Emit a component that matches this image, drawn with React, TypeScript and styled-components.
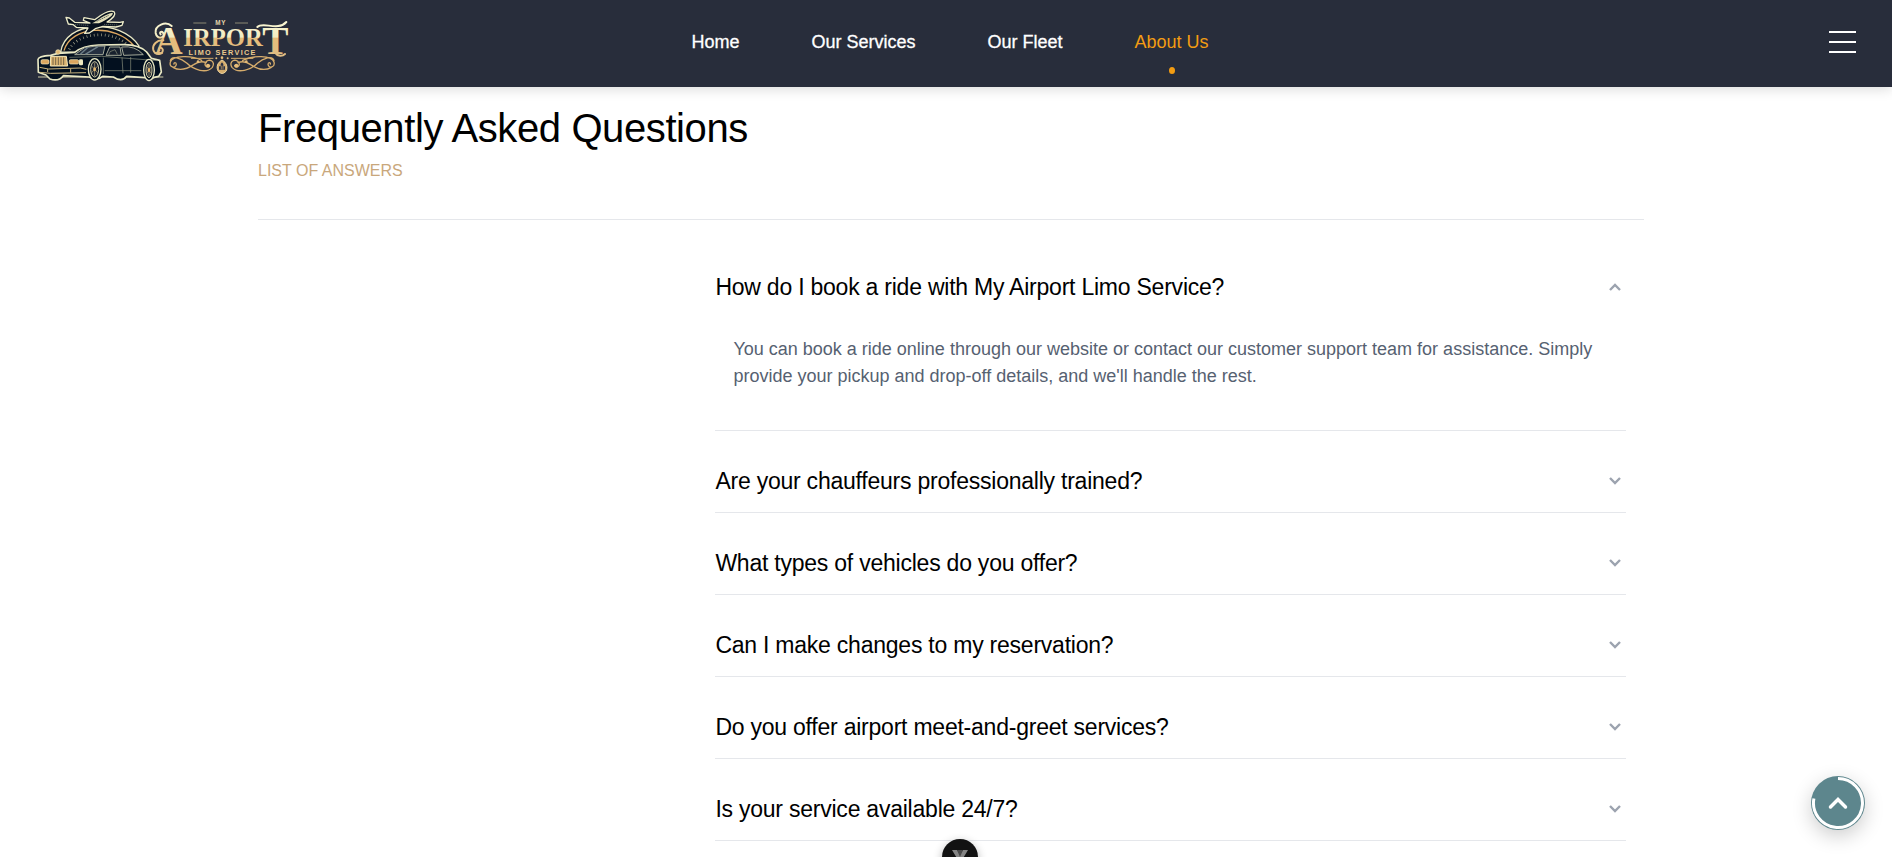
import React, { useState } from "react";
import styled, { createGlobalStyle } from "styled-components";

const GlobalStyle = createGlobalStyle`
  *, *::before, *::after { box-sizing: border-box; }
  body {
    margin: 0;
    background: #fff;
    color: #000;
    font-family: Arial, "Liberation Sans", sans-serif;
    overflow: hidden;
  }
  h1, h2 {
    margin: 0;
    font-weight: 400;
    letter-spacing: -0.01em;
  }
`;

const Header = styled.header`
  display: grid;
  grid-template-columns: 1fr auto 1fr;
  align-items: center;
  height: 87px;
  padding: 0 36px;
  background: #282d3b;
  box-shadow: 0 2px 12px rgba(0, 0, 0, 0.15);
`;

const LogoLink = styled.a`
  display: block;
  width: 254px;
  height: 87px;
  svg { display: block; width: 100%; height: 100%; }
`;

const Nav = styled.nav`
  display: flex;
  gap: 72px;
  padding: 0 0 4px 8px;
`;

const NavLink = styled.a<{ $active?: boolean }>`
  position: relative;
  color: ${(p) => (p.$active ? "#f39c12" : "#fff")};
  font-size: 18px;
  line-height: 24px;
  text-decoration: none;
  -webkit-text-stroke: ${(p) => (p.$active ? "0" : "0.3px #fff")};
  &::after {
    content: "";
    display: ${(p) => (p.$active ? "block" : "none")};
    position: absolute;
    left: 50%;
    bottom: -20px;
    width: 6px;
    height: 7px;
    margin-left: -3px;
    border-radius: 50%;
    background: #f39c12;
  }
`;

const MenuButton = styled.button`
  justify-self: end;
  display: flex;
  flex-direction: column;
  gap: 8px;
  width: 27px;
  padding: 0 0 4px;
  border: 0;
  background: none;
  span { height: 2px; background: #fff; }
`;

const Main = styled.main`
  padding-left: 10px;
`;

const Container = styled.div`
  width: 74%;
  max-width: 1386px;
  margin: 0 auto;
`;

const PageHead = styled.div`
  padding: 17px 0 36px;
  border-bottom: 1px solid #e5e7eb;
`;

const Title = styled.h1`
  font-size: 40px;
  line-height: 48px;
`;

const Subtitle = styled.p`
  margin: 7px 0 0;
  color: #c9a77c;
  font-size: 16px;
  line-height: 24px;
`;

const FaqList = styled.div`
  margin-left: 33%;
  padding: 17px 18px 0 0;
`;

const FaqItem = styled.section`
  padding-top: 32px;
  border-bottom: 1px solid #e5e7eb;
`;

const Heading = styled.h2`
  font-size: 23px;
`;

const Question = styled.button`
  display: flex;
  align-items: center;
  justify-content: space-between;
  width: 100%;
  padding: 0 5px 13px 0;
  border: 0;
  background: none;
  color: #000;
  font: inherit;
  letter-spacing: inherit;
  line-height: 36px;
  text-align: left;
`;

const Answer = styled.p`
  margin: 0;
  padding: 18px 18px 40px;
  color: #566171;
  font-size: 18px;
  line-height: 27px;
`;

const TopButton = styled.button`
  position: fixed;
  right: 27px;
  bottom: 27px;
  width: 54px;
  height: 54px;
  padding: 0;
  border: 0;
  border-radius: 50%;
  background: #5d868d;
  box-shadow: 0 6px 20px rgba(0, 0, 0, 0.2);
  svg { display: block; }
`;

const Bubble = styled.button`
  position: fixed;
  left: calc(50% - 4px);
  bottom: -18px;
  width: 36px;
  height: 36px;
  padding: 0;
  border: 0;
  border-radius: 50%;
  background: #121212;
  box-shadow: 0 3px 10px rgba(0, 0, 0, 0.3);
  svg { display: block; }
`;

function Wheel({ x, y, rx }: { x: number; y: number; rx: number }) {
  return (
    <g>
      <ellipse cx={x} cy={y} rx={rx + 5} ry="32" fill="#03101f" stroke="#e9e8c4" strokeWidth="4" />
      <ellipse cx={x} cy={y} rx={rx - 2} ry="23" fill="#1b2230" stroke="#cfcba6" strokeWidth="3" />
      <path
        d={`M${x} ${y - 20}V${y + 20}M${x - rx + 4} ${y - 11}L${x + rx - 4} ${y + 11}M${x + rx - 4} ${y - 11}L${x - rx + 4} ${y + 11}`}
        stroke="#bdb083"
        strokeWidth="2"
      />
      <ellipse cx={x} cy={y} rx="4" ry="6" fill="#e7b96e" />
    </g>
  );
}

const scroll =
  "M170 181C140 165 82 166 76 186C72 202 91 207 94 194C94 186 86 187 87 192M76 182C80 165 108 174 126 190C146 210 184 222 202 202C214 184 190 172 181 189C177 199 190 205 194 197M84 202C104 214 128 206 146 194C160 184 174 184 184 188";

function Logo() {
  return (
    <svg viewBox="18 0 762 261" role="img" aria-label="My Airport Limo Service">
      <defs>
        <linearGradient id="gold" gradientUnits="userSpaceOnUse" x1="0" y1="60" x2="0" y2="170">
          <stop offset="0" stopColor="#fbf8d6" />
          <stop offset="0.47" stopColor="#f2ebc0" />
          <stop offset="0.49" stopColor="#e6bd7a" />
          <stop offset="1" stopColor="#dfbd84" />
        </linearGradient>
      </defs>

      {/* dome behind the car */}
      <path d="M92 156C106 62 270 54 327 138L310 160Z" fill="#07111e" stroke="#e9e8c4" strokeWidth="4" />
      <path d="M102 152C122 76 258 70 312 138" fill="none" stroke="#dca65f" strokeWidth="4" />
      <path d="M118 148C145 96 248 90 292 134" fill="none" stroke="#a9a98f" strokeWidth="8" strokeDasharray="2 9" />

      {/* airplane */}
      <path
        d="M108 52L118 54L134 67L180 69L160 61L162 53L194 59C216 42 242 28 253 36C258 44 247 56 231 66L270 67L280 65L276 76L258 81L219 79L196 86L178 99L164 100L174 84L139 82L130 74L115 72Z"
        fill="#07111e"
        stroke="#efedca"
        strokeWidth="4"
        strokeLinejoin="round"
      />
      <path d="M186 70C204 61 222 43 248 38C252 46 231 58 207 70Z" fill="#e3dfb9" />
      <path d="M200 64L236 46M135 74L175 76M222 73L262 75" stroke="#555f5c" strokeWidth="3" strokeDasharray="4 2" />

      {/* limousine */}
      <path d="M24 231H400" stroke="#cfcda8" strokeWidth="3" />
      <path
        d="M24 178Q26 168 62 166L84 160L134 157Q158 137 205 135L280 134Q326 133 350 156L364 175L389 181L394 216L386 229L372 232Q360 242 346 233L290 229Q276 248 250 231L218 229Q200 244 178 231L100 227Q86 246 60 237L48 225L25 217Z"
        fill="#03101f"
        stroke="#e9e8c4"
        strokeWidth="5"
        strokeLinejoin="round"
      />
      <path d="M134 164L164 143Q190 137 225 138L219 164Z" fill="#253040" stroke="#a4a999" strokeWidth="3" />
      <path d="M151 163L174 142M166 163L204 140" stroke="#6d7f88" strokeWidth="4" />
      <path d="M228 166L239 141H270L274 166ZM281 166L275 141Q316 136 340 164Z" fill="#17202d" stroke="#a4a999" strokeWidth="3" />
      <path d="M236 165L240 155L255 149L262 163M118 172L215 169L383 182M220 173V222M276 172L279 220M224 212H334M302 171V218" fill="none" stroke="#8d927f" strokeWidth="2" />
      <path d="M62 169H109L113 198H61Z" fill="#ddb673" stroke="#f5eabd" strokeWidth="3" />
      <path d="M69 172V195M77 172V195M85 172V195M93 172V195M101 172V195" stroke="#766547" strokeWidth="3" />
      <rect x="33" y="179" width="24" height="13" rx="4" fill="#dca65f" stroke="#f5eabd" strokeWidth="2" />
      <rect x="118" y="179" width="28" height="13" rx="4" fill="#dca65f" stroke="#f5eabd" strokeWidth="2" />
      <rect x="147" y="178" width="12" height="18" rx="4" fill="#efe9bf" />
      <path d="M29 202L55 207L151 204L169 208M30 217L62 220L168 218M53 207V216M122 206V218" fill="none" stroke="#c9b47e" strokeWidth="3" />
      <circle cx="84" cy="156" r="7" fill="#ddb673" stroke="#f5eabd" strokeWidth="2" />
      <Wheel x={194} y={208} rx={14} />
      <Wheel x={357} y={210} rx={11} />

      {/* wordmark */}
      <g transform="translate(345 0)">
        <g fill="url(#gold)" fontFamily="'Liberation Serif', serif" fontWeight="700">
          <text x="28" y="161" fontSize="118">A</text>
          <text x="115" y="139" fontSize="74">IRPOR</text>
          <text x="352" y="163" fontSize="118">T</text>
        </g>
        <g fill="none" stroke="url(#gold)" strokeWidth="6" strokeLinecap="round">
          <path d="M80 78C62 62 29 76 32 99C36 122 64 113 54 98C49 92 42 98 47 103" />
          <path d="M55 121C36 119 21 134 25 150C31 169 57 164 53 148C48 138 38 146 43 151" />
          <path d="M337 81C352 64 400 94 424 66" />
          <path d="M390 158C398 170 412 170 420 162" />
        </g>
        <text x="227" y="75" fontSize="19" fontWeight="700" letterSpacing="2" textAnchor="middle" fontFamily="'Liberation Sans', sans-serif" fill="#e5d7ad">MY</text>
        <path d="M145 69H184M270 69H309" stroke="#8b8975" strokeWidth="3" />
        <text x="233" y="164" fontSize="22" fontWeight="700" letterSpacing="4" textAnchor="middle" fontFamily="'Liberation Sans', sans-serif" fill="#e8c98f">LIMO SERVICE</text>
        <g fill="none" stroke="#d5ac6c" strokeWidth="4" strokeLinecap="round">
          <path d={scroll} />
          <path d={scroll} transform="translate(463 0) scale(-1 1)" />
          <path d="M139 175H204M259 175H324" strokeWidth="3" />
        </g>
        <g fill="#e6bd7a">
          <circle cx="189" cy="197" r="6" />
          <circle cx="274" cy="197" r="6" />
          <circle cx="159" cy="185" r="4" />
          <circle cx="304" cy="185" r="4" />
          <circle cx="214" cy="175" r="3" />
          <circle cx="231" cy="173" r="4" />
          <circle cx="248" cy="175" r="3" />
        </g>
        <path d="M231 180C245 187 249 203 243 214Q231 227 220 214C212 202 218 187 231 180Z" fill="#d5ac6c" stroke="#f0d69e" strokeWidth="3" />
        <path d="M222 209V199H227V192L231 187L235 192V199H240V209Z" fill="#283044" />
        <path d="M229 208V197M234 208V197" stroke="#d5ac6c" strokeWidth="2" />
      </g>
    </svg>
  );
}

function Chevron({ up }: { up: boolean }) {
  return (
    <svg width="12" height="12" viewBox="0 0 12 12" fill="none" aria-hidden="true">
      <path d={up ? "M1 9L6 4L11 9" : "M1 3L6 8L11 3"} stroke="#9ca3af" strokeWidth="2.4" />
    </svg>
  );
}

const links = ["Home", "Our Services", "Our Fleet", "About Us"];

const faqs = [
  {
    q: "How do I book a ride with My Airport Limo Service?",
    a: "You can book a ride online through our website or contact our customer support team for assistance. Simply provide your pickup and drop-off details, and we'll handle the rest.",
  },
  { q: "Are your chauffeurs professionally trained?", a: "" },
  { q: "What types of vehicles do you offer?", a: "" },
  { q: "Can I make changes to my reservation?", a: "" },
  { q: "Do you offer airport meet-and-greet services?", a: "" },
  { q: "Is your service available 24/7?", a: "" },
];

export default function App() {
  const [open, setOpen] = useState(0);
  return (
    <>
      <GlobalStyle />
      <Header>
        <LogoLink href="#home"><Logo /></LogoLink>
        <Nav>
          {links.map((l) => (
            <NavLink key={l} href="#" $active={l === "About Us"}>{l}</NavLink>
          ))}
        </Nav>
        <MenuButton aria-label="Open menu"><span /><span /><span /></MenuButton>
      </Header>
      <Main>
        <Container>
          <PageHead>
            <Title>Frequently Asked Questions</Title>
            <Subtitle>LIST OF ANSWERS</Subtitle>
          </PageHead>
          <FaqList>
            {faqs.map((f, i) => (
              <FaqItem key={f.q}>
                <Heading>
                  <Question aria-expanded={open === i} onClick={() => setOpen(open === i ? -1 : i)}>
                    {f.q}
                    <Chevron up={open === i} />
                  </Question>
                </Heading>
                {open === i && f.a && <Answer>{f.a}</Answer>}
              </FaqItem>
            ))}
          </FaqList>
        </Container>
      </Main>
      <Bubble aria-label="Open widget">
        <svg width="36" height="36" viewBox="0 0 36 36" aria-hidden="true">
          <path d="M10 11H15L18 16L21 11H26L20 21V27H16V21Z" fill="#858585" />
          <path d="M15 11H21L18 18Z" fill="#4c4c4c" />
        </svg>
      </Bubble>
      <TopButton aria-label="Back to top">
        <svg width="54" height="54" viewBox="0 0 54 54" fill="none" aria-hidden="true">
          <path d="M27 2.5A24.5 24.5 0 1 1 2.9 22.5" stroke="#fff" strokeWidth="3" />
          <path d="M19.5 31L27 23.5L34.5 31" stroke="#fff" strokeWidth="3.5" strokeLinecap="round" />
        </svg>
      </TopButton>
    </>
  );
}
